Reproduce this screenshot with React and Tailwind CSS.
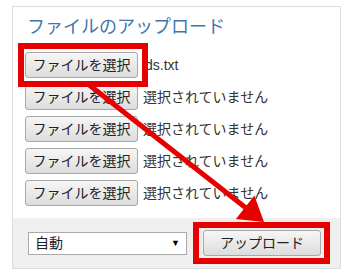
import React from "react";

const font = { fontFamily: '"Liberation Sans", "Noto Sans CJK JP", sans-serif' };

function FileRow({ name, first }) {
  return (
    <div className="flex items-center h-[26px]">
      <div className="h-[26px] w-[113px] flex items-center justify-center border border-[#a8a8a8] rounded-[3px] bg-gradient-to-b from-[#f6f6f6] to-[#dddddd] text-[14px] text-[#222] leading-none">
        ファイルを選択
      </div>
      <span className={(first ? "ml-[7px]" : "ml-[5px]") + " text-[14px] text-[#333] leading-none"}>{name}</span>
    </div>
  );
}

export default function App() {
  const rows = ["ds.txt", "選択されていません", "選択されていません", "選択されていません", "選択されていません"];
  return (
    <div className="relative w-[349px] h-[278px] bg-white overflow-hidden" style={font}>
      <div className="ml-[12px] mt-[6px] w-[329px] border border-[#dcdcdc] bg-white">
        <div className="px-[12px] pt-[7px] pb-[12px]">
          <h2 className="ml-[2px] text-[18px] leading-[27px] text-[#4276a9] font-normal">
            ファイルのアップロード
          </h2>
          <div className="mt-[11px] flex flex-col gap-[6px]">
            {rows.map((r, i) => (
              <FileRow key={i} name={r} first={i === 0} />
            ))}
          </div>
        </div>
        <div className="h-[50px] bg-[#efefef] flex items-center pl-[15px] gap-[16px]">
          <div className="h-[23px] w-[159px] border border-[#a9a9a9] bg-white flex items-center justify-between pl-[6px] pr-[6px] text-[14px] text-[#222]">
            <span className="leading-none">自動</span>
            <span className="text-[9px] leading-none text-black">▼</span>
          </div>
          <div className="h-[26px] w-[118px] flex items-center justify-center border border-[#a8a8a8] rounded-[3px] bg-gradient-to-b from-[#f6f6f6] to-[#dddddd] text-[14px] text-[#222] leading-none">
            アップロード
          </div>
        </div>
      </div>

      {/* annotation overlays */}
      <div className="absolute left-[18px] top-[43px] w-[130px] h-[44px] border-[6px] border-[#e60000]" />
      <div className="absolute left-[193px] top-[222px] w-[137px] h-[42px] border-[6px] border-[#e60000]" />
      <svg className="absolute left-0 top-0" width="349" height="278" viewBox="0 0 349 278">
        <line x1="88" y1="84" x2="246" y2="208" stroke="#e60000" strokeWidth="5" />
        <polygon points="264,222 235.9,219 254.4,195.4" fill="#e60000" />
      </svg>
    </div>
  );
}
